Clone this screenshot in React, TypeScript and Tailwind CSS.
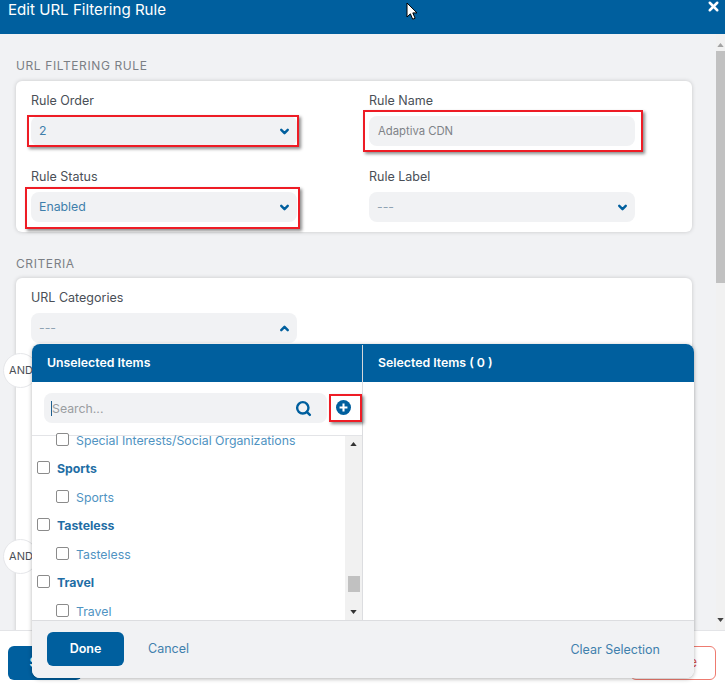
import { ChevronDown, ChevronUp, Search, X } from 'lucide-react';

const BLUE = 'text-[#005f9e]';

function Select({ value, up, muted }: { value: string; up?: boolean; muted?: boolean }) {
  const Icon = up ? ChevronUp : ChevronDown;
  return (
    <div className="flex h-[30px] w-[266px] items-center justify-between rounded-lg bg-[#f1f2f4] pl-2 pr-[6px]">
      <span className={`text-[12.3px] ${muted ? 'text-[#8fa3b3]' : 'text-[#3f7fab]'}`}>{value}</span>
      <Icon className={`h-[13px] w-[13px] ${BLUE}`} strokeWidth={4.5} />
    </div>
  );
}

function Field({ label, children }: { label: string; children: React.ReactNode }) {
  return (
    <div className="flex flex-col">
      <label className="mb-[7px] h-[17px] text-[12.5px] leading-[17px] text-[#4a4f57]">{label}</label>
      {children}
    </div>
  );
}

function Check({ label, sub }: { label: string; sub?: boolean }) {
  return (
    <div className={`flex h-[28.5px] items-center ${sub ? 'pl-6' : 'pl-[5px]'}`}>
      <span className="-mt-[3px] mr-[7px] h-[13px] w-[13px] shrink-0 rounded-[2px] border-[1.5px] border-[#8b8b8b] bg-white" />
      <span className={sub ? 'text-[12.3px] text-[#4f93c2]' : 'text-[12.3px] font-bold text-[#1f6ea5]'}>{label}</span>
    </div>
  );
}

function RedBox({ className }: { className: string }) {
  return <div className={`pointer-events-none absolute border-2 border-[#ee1c25] shadow-[2px_2px_3px_rgba(0,0,0,0.45)] ${className}`} />;
}

function AndBadge({ className }: { className: string }) {
  return (
    <div className={`absolute left-[3px] flex h-[35px] w-[35px] items-center justify-center rounded-full border border-[#e6e7ea] bg-white text-[11px] text-[#4a4f57] ${className}`}>
      <span className="ml-[1px]">AND</span>
    </div>
  );
}

function ScrollArrow({ dir, className }: { dir: 'up' | 'down'; className?: string }) {
  return (
    <svg viewBox="0 0 8 5" className={`h-[4px] w-[7px] ${className ?? ''}`}>
      <path d={dir === 'up' ? 'M4 0 8 5H0Z' : 'M0 0H8L4 5Z'} fill="currentColor" />
    </svg>
  );
}

export default function App() {
  return (
    <div className="relative flex h-[691px] w-[725px] flex-col overflow-hidden bg-white font-['Inter',sans-serif]">
      {/* Header */}
      <div className="flex h-[34px] shrink-0 items-start justify-between bg-[#005f9e] pl-2 pr-1 text-white">
        <span className="text-[15.1px] leading-[20px]">Edit URL Filtering Rule</span>
        <X className="mt-[-1px] h-[15px] w-[15px]" strokeWidth={4} />
      </div>

      {/* Scrolling body */}
      <div className="flex h-[596px] shrink-0 bg-[#f1f2f4]">
        <div className="w-[716px] overflow-hidden pl-4 pr-6">
          <div className="mt-[24px] mb-[8px] h-[15px] text-[12px] leading-[15px] tracking-[0.6px] text-[#7b7f85]">URL FILTERING RULE</div>
          <div className="grid h-[151px] grid-cols-[266px_266px] gap-x-[72px] gap-y-[12px] rounded-md bg-white pt-[11px] pl-[15px] shadow-[0_0_4px_rgba(0,0,0,0.18)]">
            <Field label="Rule Order"><Select value="2" /></Field>
            <Field label="Rule Name">
              <div className="flex h-[30px] w-[266px] items-center rounded-lg bg-[#f1f2f4] pl-[9px] text-[11.3px] text-[#7f8388]">Adaptiva CDN</div>
            </Field>
            <Field label="Rule Status"><Select value="Enabled" /></Field>
            <Field label="Rule Label"><Select value="---" muted /></Field>
          </div>

          <div className="mt-[24px] mb-[7px] h-[15px] text-[12px] leading-[15px] tracking-[0.6px] text-[#7b7f85]">CRITERIA</div>
          <div className="h-[360px] rounded-md bg-white pt-[11px] pl-[15px] shadow-[0_0_4px_rgba(0,0,0,0.18)]">
            <Field label="URL Categories"><Select value="---" up muted /></Field>
          </div>
        </div>
        <div className="flex w-[9px] flex-col items-center bg-[#f1f1f1] pt-[9px] text-[#a3a3a3]">
          <ScrollArrow dir="up" />
          <div className="mt-[4px] h-[232px] w-full bg-[#c1c1c1]" />
          <div className="mt-auto mb-[8px] text-[#444]"><ScrollArrow dir="down" /></div>
        </div>
      </div>

      {/* Footer */}
      <div className="flex flex-1 items-start justify-between border-t border-[#e3e4e7] bg-white pt-[15px] pr-[9px] pl-2">
        <button className="flex h-[34px] w-[74px] items-center justify-center rounded-md bg-[#005f9e] text-[13px] font-semibold text-white">Save</button>
        <button className="flex h-[34px] w-[86px] items-center justify-end rounded-md border border-[#ee7b70] pr-[18px] text-[13px] text-[#d9534f]">Delete</button>
      </div>

      <AndBadge className="top-[353px]" />
      <AndBadge className="top-[539px]" />

      {/* Category picker */}
      <div className="absolute top-[344px] left-[32px] flex h-[334px] w-[662px] flex-col overflow-hidden rounded-lg bg-white shadow-[0_1px_4px_rgba(0,0,0,0.3)]">
        <div className="flex h-[38px] shrink-0 bg-[#005f9e] pt-[1px] text-[12.3px] font-semibold text-white">
          <div className="flex w-[331px] items-center border-r border-[#d5d7da] pl-[15px]">Unselected Items</div>
          <div className="flex items-center pl-[15px]">Selected Items ( 0 )</div>
        </div>
        <div className="flex min-h-0 flex-1">
          <div className="flex w-[331px] shrink-0 flex-col border-r border-[#dcdde0]">
            <div className="flex h-[54px] shrink-0 items-start border-b border-[#e3e4e7] pt-[11px] pl-[12px]">
              <div className="flex h-[30px] w-[283px] items-center justify-between rounded-lg bg-[#f1f2f4] pr-[15px] pl-[7px]">
                <span className="mt-[1px] border-l border-[#1f5f8f] text-[12.3px] leading-[15px] text-[#9a9da1]">Search...</span>
                <Search className={`h-[17px] w-[17px] ${BLUE}`} strokeWidth={3.4} />
              </div>
              <svg viewBox="0 0 16 16" className="mt-[7px] ml-[9px] h-[15px] w-[15px]">
                <circle cx="8" cy="8" r="8" fill="#005f9e" />
                <path d="M8 3.8v8.4M3.8 8h8.4" stroke="#fff" strokeWidth="2.2" />
              </svg>
            </div>
            <div className="flex min-h-0 flex-1">
              <div className="-mt-[9.5px] min-w-0 flex-1 overflow-hidden">
                <Check sub label="Special Interests/Social Organizations" />
                <Check label="Sports" />
                <Check sub label="Sports" />
                <Check label="Tasteless" />
                <Check sub label="Tasteless" />
                <Check label="Travel" />
                <Check sub label="Travel" />
              </div>
              <div className="flex w-[17px] shrink-0 flex-col items-center bg-[#f1f1f1] pt-[6px] text-[#333]">
                <ScrollArrow dir="up" />
                <div className="mt-[130px] h-[16px] w-[12px] bg-[#c1c1c1]" />
                <div className="mt-auto mb-[6px]"><ScrollArrow dir="down" /></div>
              </div>
            </div>
          </div>
          <div className="flex-1" />
        </div>
        <div className="flex h-[58px] shrink-0 items-start justify-between border-t border-[#dcdde0] bg-[#f1f2f4] pt-[11px] pr-[34px] pl-[15px]">
          <div className="flex items-center">
            <button className="h-[34px] w-[77px] rounded-md bg-[#005f9e] pt-[1px] text-[12.5px] font-semibold text-white">Done</button>
            <span className="ml-6 text-[12.5px] text-[#3f80ad]">Cancel</span>
          </div>
          <span className="mt-[9px] text-[12.5px] text-[#3f80ad]">Clear Selection</span>
        </div>
      </div>

      <RedBox className="top-[115px] left-[27px] h-[32px] w-[272px]" />
      <RedBox className="top-[110px] left-[363px] h-[42px] w-[280px]" />
      <RedBox className="top-[187px] left-[25px] h-[42px] w-[275px]" />
      <RedBox className="top-[394px] left-[329px] h-[28px] w-[33px]" />

      {/* Mouse pointer from the capture */}
      <svg viewBox="0 0 12 19" className="absolute top-[2px] left-[406px] h-[19px] w-[12px]">
        <path d="M1 1v14l3.4-3.2 2.3 5.4 2.4-1-2.3-5.3H11Z" fill="#fff" stroke="#000" strokeWidth="1" />
      </svg>
    </div>
  );
}
